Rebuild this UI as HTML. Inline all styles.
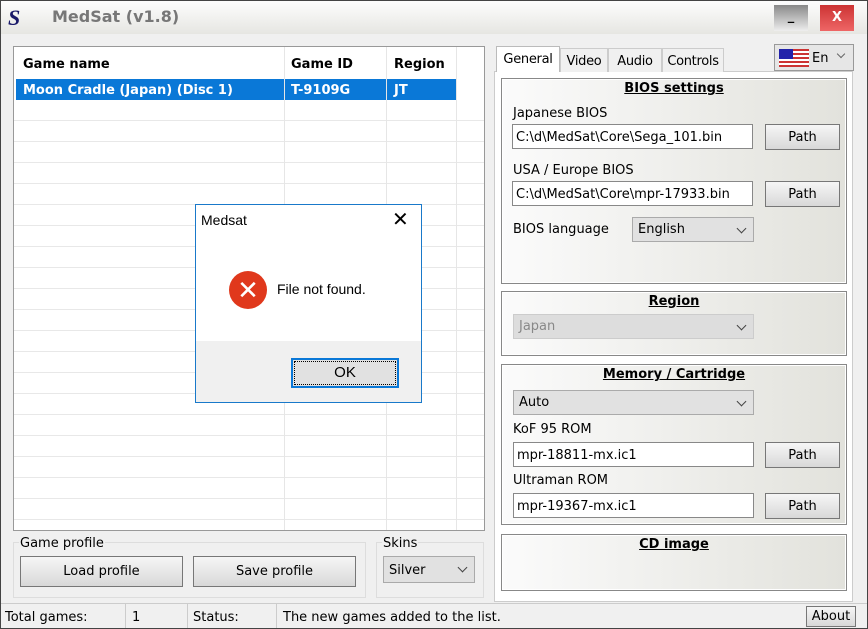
<!DOCTYPE html>
<html><head><meta charset="utf-8"><style>
*{box-sizing:border-box;margin:0;padding:0}
body{width:868px;height:629px;overflow:hidden;font-family:Tahoma,"DejaVu Sans","Liberation Sans",sans-serif;font-size:13px;color:#000;background:#f0f0f0;position:relative}
.a{position:absolute}
.win{left:0;top:0;width:868px;height:629px;border:1px solid #444;}
.title{left:1px;top:1px;width:866px;height:33px;background:linear-gradient(#fdfdfd,#e6e6e2)}
.list{left:13px;top:46px;width:472px;height:485px;background:#fff;border:1px solid #999}
.vl{width:1px;background:#e6e6e6}
.grp{background:linear-gradient(90deg,#fbfbfb,#e2e2dc);border:1px solid #888;box-shadow:inset 0 0 0 1px #fff}
.h{font-weight:bold;text-decoration:underline;text-align:center;width:100%;top:2px}
.inp{background:#fff;border:1px solid #888;padding:5px 3px 3px;font-size:13px;height:25px;white-space:nowrap;overflow:hidden}
.btn{background:linear-gradient(#f6f6f6,#d8d8d8);border:1px solid #777;text-align:center;font-size:13px;line-height:25px}
.sel{background:#e1e1e1;border:1px solid #aaa;padding:4px 5px 2px;height:25px}
.sel:after{content:"";position:absolute;right:8px;top:7px;width:6px;height:6px;border-right:1px solid #444;border-bottom:1px solid #444;transform:rotate(45deg)}
.tab{top:48px;height:24px;border:1px solid #ccc;border-bottom:none;background:#f0f0f0;padding:5px 0 0;text-align:center;letter-spacing:-0.3px}
</style></head><body>
<div class="a win"></div>
<div class="a title"></div>
<div class="a" style="left:8px;top:5px;font:bold italic 22px 'Liberation Serif',serif;color:#1a1a6a">S</div>
<div class="a" style="left:52px;top:7px;font-size:16px;font-weight:bold;color:#777">MedSat (v1.8)</div>
<div class="a" style="left:774px;top:5px;width:34px;height:26px;background:linear-gradient(#888,#eee);color:#000;text-align:center;font-weight:bold;line-height:24px">_</div>
<div class="a" style="left:820px;top:5px;width:34px;height:26px;background:linear-gradient(#c33,#e66);color:#fff;text-align:center;font-weight:bold;line-height:26px">X</div>

<div class="a list">
<div class="a" style="left:9px;top:10px;font-weight:bold">Game name</div>
<div class="a" style="left:277px;top:10px;font-weight:bold">Game ID</div>
<div class="a" style="left:380px;top:10px;font-weight:bold">Region</div>
<div class="a" style="left:2px;top:32px;width:440px;height:21px;background:#0a78d7"></div>
<div class="a" style="left:9px;top:36px;color:#fff;font-weight:bold">Moon Cradle (Japan) (Disc 1)</div>
<div class="a" style="left:277px;top:36px;color:#fff;font-weight:bold">T-9109G</div>
<div class="a" style="left:380px;top:36px;color:#fff;font-weight:bold">JT</div>
<div class="a" style="left:0;top:53px;width:470px;height:430px;background:repeating-linear-gradient(#fff 0 20px,#e8e8e8 20px 21px)"></div>
<div class="a vl" style="left:270px;top:0;height:483px"></div>
<div class="a vl" style="left:372px;top:0;height:483px"></div>
<div class="a vl" style="left:442px;top:0;height:483px"></div>
</div>

<div class="a" style="left:13px;top:542px;width:353px;height:56px;border:1px solid #ddd"></div>
<div class="a" style="left:19px;top:536px;background:#f0f0f0;padding:0 1px">Game profile</div>
<div class="a btn" style="left:20px;top:556px;width:163px;height:31px;line-height:30px">Load profile</div>
<div class="a btn" style="left:193px;top:556px;width:163px;height:31px;line-height:30px">Save profile</div>
<div class="a" style="left:376px;top:542px;width:108px;height:56px;border:1px solid #ddd"></div>
<div class="a" style="left:382px;top:536px;background:#f0f0f0;padding:0 1px">Skins</div>
<div class="a sel" style="left:383px;top:556px;width:92px;height:27px;padding-top:6px">Silver</div>

<div class="a" style="left:494px;top:71px;width:359px;height:531px;background:#fff;border:1px solid #ccc"></div>
<div class="a tab" style="left:496px;top:46px;width:64px;height:26px;background:#fff;border-color:#bbb">General</div>
<div class="a tab" style="left:560px;width:48px">Video</div>
<div class="a tab" style="left:608px;width:54px">Audio</div>
<div class="a tab" style="left:662px;width:62px">Controls</div>
<div class="a" style="left:774px;top:44px;width:80px;height:27px;background:#e6e6e6;border:1px solid #999"></div>
<div class="a" style="left:779px;top:49px;width:30px;height:18px;background:repeating-linear-gradient(#c33 0 2px,#fff 2px 4px)"></div>
<div class="a" style="left:779px;top:49px;width:14px;height:10px;background:#22a"></div>
<div class="a" style="left:812px;top:51px">En</div>
<div class="a" style="left:838px;top:51px;width:6px;height:6px;border-right:1px solid #666;border-bottom:1px solid #666;transform:rotate(45deg)"></div>

<div class="a grp" style="left:501px;top:78px;width:346px;height:206px">
<div class="a h">BIOS settings</div>
<div class="a" style="left:11px;top:27px">Japanese BIOS</div>
<div class="a inp" style="left:10px;top:45px;width:241px">C:\d\MedSat\Core\Sega_101.bin</div>
<div class="a btn" style="left:263px;top:45px;width:75px;height:26px">Path</div>
<div class="a" style="left:11px;top:84px">USA / Europe BIOS</div>
<div class="a inp" style="left:10px;top:102px;width:241px">C:\d\MedSat\Core\mpr-17933.bin</div>
<div class="a btn" style="left:263px;top:102px;width:75px;height:26px">Path</div>
<div class="a" style="left:11px;top:143px">BIOS language</div>
<div class="a sel" style="left:130px;top:138px;width:122px">English</div>
</div>

<div class="a grp" style="left:501px;top:291px;width:346px;height:65px">
<div class="a h">Region</div>
<div class="a sel" style="left:11px;top:22px;width:241px;color:#888;background:#ddd;border-color:#ccc">Japan</div>
</div>

<div class="a grp" style="left:501px;top:364px;width:346px;height:161px">
<div class="a h">Memory / Cartridge</div>
<div class="a sel" style="left:11px;top:25px;width:241px">Auto</div>
<div class="a" style="left:11px;top:57px">KoF 95 ROM</div>
<div class="a inp" style="left:11px;top:77px;width:241px">mpr-18811-mx.ic1</div>
<div class="a btn" style="left:263px;top:77px;width:75px;height:26px">Path</div>
<div class="a" style="left:11px;top:108px">Ultraman ROM</div>
<div class="a inp" style="left:11px;top:128px;width:241px">mpr-19367-mx.ic1</div>
<div class="a btn" style="left:263px;top:128px;width:75px;height:26px">Path</div>
</div>

<div class="a grp" style="left:501px;top:534px;width:346px;height:57px">
<div class="a h">CD image</div>
</div>

<div class="a" style="left:1px;top:603px;width:866px;height:1px;background:#ccc"></div>
<div class="a" style="left:5px;top:610px">Total games:</div>
<div class="a" style="left:125px;top:604px;width:1px;height:24px;background:#ccc"></div>
<div class="a" style="left:132px;top:610px">1</div>
<div class="a" style="left:187px;top:604px;width:1px;height:24px;background:#ccc"></div>
<div class="a" style="left:193px;top:610px">Status:</div>
<div class="a" style="left:276px;top:604px;width:1px;height:24px;background:#ccc"></div>
<div class="a" style="left:283px;top:610px">The new games added to the list.</div>
<div class="a btn" style="left:806px;top:606px;width:50px;height:21px;line-height:19px">About</div>

<div class="a" style="left:195px;top:204px;width:227px;height:199px;background:#fff;border:1px solid #1979ca;font-family:'Liberation Sans',sans-serif">
<div class="a" style="left:5px;top:7px;font-size:14px">Medsat</div>
<div class="a" style="left:196px;top:2px;font-size:20px;font-weight:300">✕</div>
<div class="a" style="left:33px;top:66px;width:38px;height:38px;border-radius:50%;background:#e0381c;color:#fff;text-align:center;font-size:26px;line-height:38px">✕</div>
<div class="a" style="left:81px;top:76px;font-size:14px">File not found.</div>
<div class="a" style="left:0;top:136px;width:225px;height:61px;background:#f0f0f0"></div>
<div class="a" style="left:95px;top:153px;width:108px;height:30px;background:#e1e1e1;border:2px solid #0a78d7;outline:1px dotted #000;outline-offset:-4px;text-align:center;line-height:26px;font-size:15px">OK</div>
</div>
</body></html>
